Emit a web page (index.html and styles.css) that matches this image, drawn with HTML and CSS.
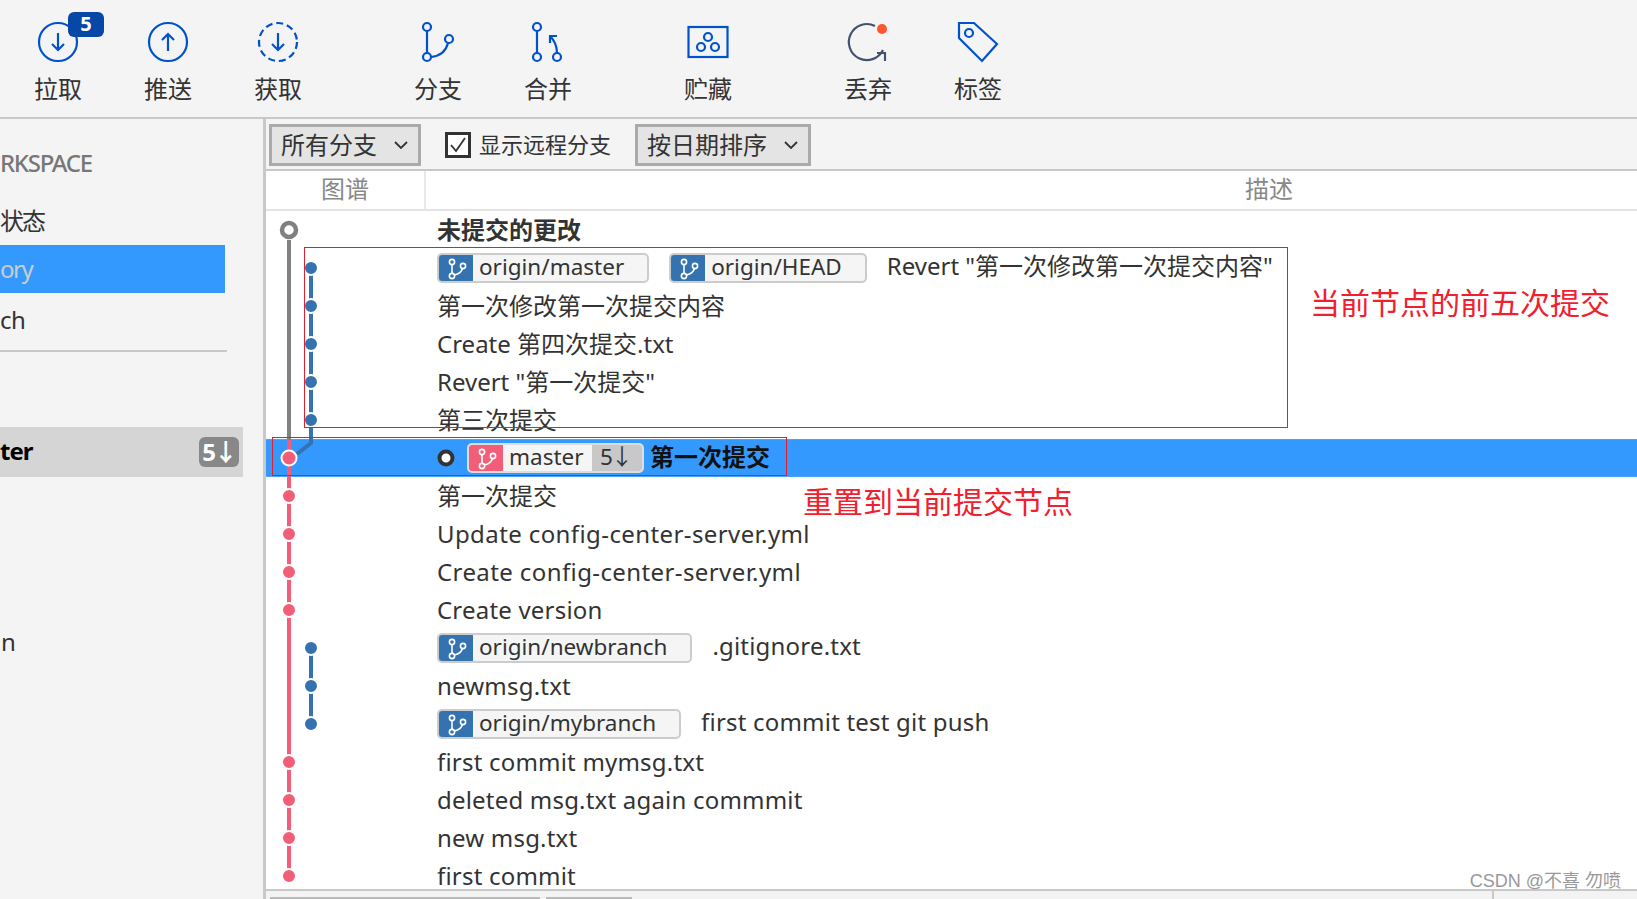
FILE: index.html
```html
<!DOCTYPE html>
<html lang="zh-CN">
<head>
  <meta charset="UTF-8">
  <meta name="viewport" content="width=device-width, initial-scale=1.0">
  <title>Sourcetree History</title>
  <link rel="stylesheet" href="styles.css">
</head>
<body>
  <header class="toolbar">
    <div class="tool-group">
      <div class="tool">
        <svg class="tool-icon" viewBox="0 0 44 44"><circle cx="22" cy="22" r="19"/><path d="M22 13v17M16 24l6 6 6-6"/></svg>
        <span class="tool-badge">5</span>
        <span class="tool-label">拉取</span>
      </div>
      <div class="tool">
        <svg class="tool-icon" viewBox="0 0 44 44"><circle cx="22" cy="22" r="19"/><path d="M22 31V14M16 20l6-6 6 6"/></svg>
        <span class="tool-label">推送</span>
      </div>
      <div class="tool">
        <svg class="tool-icon" viewBox="0 0 44 44"><circle cx="22" cy="22" r="19" stroke-dasharray="7 3.9"/><path d="M22 13v17M16 24l6 6 6-6"/></svg>
        <span class="tool-label">获取</span>
      </div>
    </div>
    <div class="tool-group">
      <div class="tool">
        <svg class="tool-icon" viewBox="0 0 44 44"><circle cx="11" cy="7" r="4"/><circle cx="11" cy="37" r="4"/><circle cx="33" cy="19" r="4"/><path d="M11 11v22M15 37c9-1 15-6 17-14"/></svg>
        <span class="tool-label">分支</span>
      </div>
      <div class="tool">
        <svg class="tool-icon" viewBox="0 0 44 44"><circle cx="11" cy="7" r="4"/><circle cx="11" cy="37" r="4"/><circle cx="31" cy="37" r="4"/><path d="M11 11v22M31 33c0-7-2-12-7-17M24 23v-7h7"/></svg>
        <span class="tool-label">合并</span>
      </div>
    </div>
    <div class="tool-group">
      <div class="tool">
        <svg class="tool-icon" viewBox="0 0 44 44"><rect x="2.5" y="7" width="39" height="30"/><circle cx="22" cy="17" r="4"/><circle cx="15" cy="27" r="4"/><circle cx="29" cy="27" r="4"/></svg>
        <span class="tool-label">贮藏</span>
      </div>
    </div>
    <div class="tool-group">
      <div class="tool">
        <svg class="tool-icon" viewBox="0 0 44 44"><path class="icon-slate" d="M29 6A18 18 0 1 0 37 30M31 33h8v8"/><circle class="icon-dot" cx="36" cy="9" r="5"/></svg>
        <span class="tool-label">丢弃</span>
      </div>
      <div class="tool">
        <svg class="tool-icon" viewBox="0 0 44 44"><path d="M3 3h15l23 21-15 17L3 18z"/><circle cx="13" cy="13" r="4"/></svg>
        <span class="tool-label">标签</span>
      </div>
    </div>
  </header>

  <div class="workspace">
    <aside class="sidebar">
      <div class="side-heading">RKSPACE</div>
      <div class="side-item side-status">状态</div>
      <div class="side-item side-active">ory</div>
      <div class="side-item side-search">ch</div>
      <div class="side-divider"></div>
      <div class="side-branch">
        <span class="side-branch-name">ter</span>
        <span class="side-count">5↓</span>
      </div>
      <div class="side-item side-remote">n</div>
    </aside>

    <main class="main">
      <div class="filters">
        <div class="dropdown dropdown-branch"><span class="dropdown-text">所有分支</span>
          <svg class="chevron" viewBox="0 0 14 8"><path d="M1 1l6 6 6-6"/></svg>
        </div>
        <label class="remote-check">
          <svg class="checkbox" viewBox="0 0 26 26"><rect x="1.5" y="1.5" width="23" height="23"/><path d="M6 13l5 6 9-13"/></svg>
          <span class="dropdown-text">显示远程分支</span>
        </label>
        <div class="dropdown dropdown-sort"><span class="dropdown-text">按日期排序</span>
          <svg class="chevron" viewBox="0 0 14 8"><path d="M1 1l6 6 6-6"/></svg>
        </div>
      </div>

      <div class="columns">
        <div class="col-graph">图谱</div>
        <div class="col-desc">描述</div>
      </div>

      <div class="commits">
        <div class="row"><strong>未提交的更改</strong></div>
        <div class="row">
          <span class="ref ref-wide"><svg class="ref-icon" viewBox="0 0 36 30"><circle cx="15" cy="9" r="2.6"/><circle cx="15" cy="23" r="2.6"/><circle cx="26" cy="13" r="2.6"/><path d="M15 12v8M17.500 22c4-1 7-3 8-6.500"/></svg>origin/master</span>
          <span class="ref ref-head"><svg class="ref-icon" viewBox="0 0 36 30"><circle cx="15" cy="9" r="2.6"/><circle cx="15" cy="23" r="2.6"/><circle cx="26" cy="13" r="2.6"/><path d="M15 12v8M17.500 22c4-1 7-3 8-6.500"/></svg>origin/HEAD</span>
          <span class="ref-desc">Revert "第一次修改第一次提交内容"</span>
        </div>
        <div class="row">第一次修改第一次提交内容</div>
        <div class="row">Create 第四次提交.txt</div>
        <div class="row">Revert "第一次提交"</div>
        <div class="row">第三次提交</div>
        <div class="row row-selected">
          <svg class="head-ring" viewBox="0 0 20 20"><circle cx="10" cy="10" r="6.500"/></svg>
          <span class="ref ref-local"><svg class="ref-icon" viewBox="0 0 36 30"><circle cx="15" cy="9" r="2.6"/><circle cx="15" cy="23" r="2.6"/><circle cx="26" cy="13" r="2.6"/><path d="M15 12v8M17.500 22c4-1 7-3 8-6.500"/></svg><span class="ref-name">master</span><span class="ref-behind">5↓</span></span>
          <strong>第一次提交</strong>
        </div>
        <div class="row">第一次提交</div>
        <div class="row latin-wide">Update config-center-server.yml</div>
        <div class="row latin-wide">Create config-center-server.yml</div>
        <div class="row latin">Create version</div>
        <div class="row">
          <span class="ref ref-wide"><svg class="ref-icon" viewBox="0 0 36 30"><circle cx="15" cy="9" r="2.6"/><circle cx="15" cy="23" r="2.6"/><circle cx="26" cy="13" r="2.6"/><path d="M15 12v8M17.500 22c4-1 7-3 8-6.500"/></svg>origin/newbranch</span>
          <span class="ref-desc latin">.gitignore.txt</span>
        </div>
        <div class="row latin">newmsg.txt</div>
        <div class="row">
          <span class="ref ref-wide"><svg class="ref-icon" viewBox="0 0 36 30"><circle cx="15" cy="9" r="2.6"/><circle cx="15" cy="23" r="2.6"/><circle cx="26" cy="13" r="2.6"/><path d="M15 12v8M17.500 22c4-1 7-3 8-6.500"/></svg>origin/mybranch</span>
          <span class="ref-desc latin">first commit test git push</span>
        </div>
        <div class="row latin">first commit mymsg.txt</div>
        <div class="row latin">deleted msg.txt again commmit</div>
        <div class="row latin">new msg.txt</div>
        <div class="row latin">first commit</div>

        <svg class="graph" viewBox="0 0 100 678">
          <path class="edge edge-gray" d="M23 29V229"/>
          <path class="edge edge-pink" d="M23 229V665"/>
          <path class="edge edge-blue" d="M45 57V232L31 243"/>
          <path class="edge edge-blue" d="M45 437V513"/>
          <circle class="node-open" cx="23" cy="19" r="7"/>
          <circle class="node node-blue" cx="45" cy="57" r="7"/>
          <circle class="node node-blue" cx="45" cy="95" r="7"/>
          <circle class="node node-blue" cx="45" cy="133" r="7"/>
          <circle class="node node-blue" cx="45" cy="171" r="7"/>
          <circle class="node node-blue" cx="45" cy="209" r="7"/>
          <circle class="node node-current" cx="23" cy="247" r="7.500"/>
          <circle class="node node-pink" cx="23" cy="285" r="7"/>
          <circle class="node node-pink" cx="23" cy="323" r="7"/>
          <circle class="node node-pink" cx="23" cy="361" r="7"/>
          <circle class="node node-pink" cx="23" cy="399" r="7"/>
          <circle class="node node-blue" cx="45" cy="437" r="7"/>
          <circle class="node node-blue" cx="45" cy="475" r="7"/>
          <circle class="node node-blue" cx="45" cy="513" r="7"/>
          <circle class="node node-pink" cx="23" cy="551" r="7"/>
          <circle class="node node-pink" cx="23" cy="589" r="7"/>
          <circle class="node node-pink" cx="23" cy="627" r="7"/>
          <circle class="node node-pink" cx="23" cy="665" r="7"/>
        </svg>

        <div class="mark mark-five"></div>
        <div class="mark mark-current"></div>
        <div class="note note-five">当前节点的前五次提交</div>
        <div class="note note-reset">重置到当前提交节点</div>
      </div>

      <div class="bottom">
        <div class="bottom-tab bottom-tab-files"></div>
        <div class="bottom-tab bottom-tab-stage"></div>
        <div class="bottom-split"></div>
      </div>
    </main>
  </div>

  <div class="watermark">CSDN @不喜 勿喷</div>
</body>
</html>
```

FILE: styles.css
```css
* {
  box-sizing: border-box;
}

html, body {
  height: 100%;
}

body {
  margin: 0;
  position: relative;
  display: flex;
  flex-direction: column;
  overflow: hidden;
  font-family: "Noto Sans", "Noto Sans CJK SC", sans-serif;
  font-size: 24px;
  color: #333;
  background-color: #f4f4f4;
}

.toolbar {
  display: flex;
  gap: 50px;
  height: 119px;
  padding-left: 3px;
  border-bottom: 2px solid #c8c8c8;
}

.tool-group {
  display: flex;
}

.tool {
  position: relative;
  display: flex;
  flex-direction: column;
  align-items: center;
  width: 110px;
  padding-top: 20px;
}

.tool-icon {
  width: 44px;
  height: 44px;
  fill: none;
  stroke: #0052cc;
  stroke-width: 2.2;
}

.icon-slate {
  stroke: #42526e;
}

.icon-dot {
  fill: #ff5630;
  stroke: none;
}

.tool-badge {
  position: absolute;
  left: 65px;
  top: 12px;
  width: 36px;
  height: 25px;
  border-radius: 6px;
  background-color: #0747a6;
  color: #fff;
  font-size: 20px;
  font-weight: bold;
  line-height: 23px;
  text-align: center;
}

.tool-label {
  margin-top: 8px;
  line-height: 34px;
}

.workspace {
  flex: 1;
  display: flex;
  min-height: 0;
}

.sidebar {
  width: 266px;
  flex-shrink: 0;
  overflow: hidden;
  border-right: 3px solid #c8c8c8;
}

.side-heading {
  margin: 29px 0 20px;
  line-height: 30px;
  letter-spacing: -1.3px;
  font-weight: 500;
  color: #777;
  white-space: nowrap;
}

.side-item {
  width: 225px;
  height: 48px;
  line-height: 46px;
}

.side-status {
  height: 47px;
  line-height: 45px;
  letter-spacing: -2px;
}

.side-active {
  line-height: 48px;
  background-color: #3399ff;
  color: #ccc;
  letter-spacing: -1.5px;
}

.side-search {
  line-height: 54px;
  letter-spacing: -0.5px;
}

.side-divider {
  width: 227px;
  height: 2px;
  margin-top: 9px;
  background-color: #c8c8c8;
}

.side-branch {
  display: flex;
  align-items: center;
  justify-content: space-between;
  width: 243px;
  height: 50px;
  margin-top: 75px;
  padding: 0 4px 0 0;
  background-color: #d5d5d5;
}

.side-branch-name {
  margin-bottom: 4px;
  font-weight: bold;
  color: #000;
  letter-spacing: -1px;
}

.side-count {
  width: 40px;
  height: 30px;
  border-radius: 6px;
  background-color: #888;
  color: #fff;
  font-weight: bold;
  letter-spacing: -2px;
  line-height: 29px;
  text-align: center;
}

.side-remote {
  margin-top: 142px;
  padding-left: 1px;
}

.main {
  flex: 1;
  min-width: 0;
  display: flex;
  flex-direction: column;
  overflow: hidden;
}

.filters {
  display: flex;
  align-items: center;
  height: 52px;
  padding: 2px 0 0 3px;
  border-bottom: 2px solid #c8c8c8;
}

.dropdown {
  display: flex;
  align-items: center;
  height: 42px;
  padding-left: 9px;
  border: 3px solid #aaa;
  background-color: #e4e4e4;
}

.dropdown-text {
  margin-top: -4px;
  white-space: nowrap;
}

.dropdown-branch {
  width: 152px;
}

.dropdown-sort {
  width: 176px;
}

.chevron {
  width: 14px;
  height: 8px;
  margin-left: 17px;
  fill: none;
  stroke: #333;
  stroke-width: 1.8;
}

.remote-check {
  display: flex;
  align-items: center;
  width: 190px;
  margin-left: 24px;
  font-size: 22px;
}

.checkbox {
  width: 26px;
  height: 26px;
  margin-right: 8px;
  flex-shrink: 0;
  fill: #fff;
  stroke: #333;
  stroke-width: 3;
}

.checkbox path {
  fill: none;
  stroke-width: 1.8;
}

.columns {
  display: flex;
  height: 40px;
  background-color: #fff;
  border-bottom: 2px solid #e4e4e4;
  color: #888;
  line-height: 36px;
  text-align: center;
}

.col-graph {
  flex: 0 0 160px;
  border-right: 2px solid #e8e8e8;
}

.col-desc {
  flex: 0 0 1686px;
}

.commits {
  position: relative;
  flex: 1;
  min-height: 0;
  overflow: hidden;
  background-color: #fff;
}

.row {
  display: flex;
  align-items: center;
  height: 38px;
  padding: 0 0 1px 171px;
  line-height: 28px;
  white-space: nowrap;
}

.latin {
  letter-spacing: 0.2px;
}

.latin-wide {
  letter-spacing: 0.4px;
}

.row strong {
  color: #333;
}

.row-selected {
  background-color: #3399ff;
  border-top: 1px solid #4aa4ff;
  border-bottom: 1px solid #4aa4ff;
}

.row-selected strong {
  margin: 0 0 2px 6px;
  color: #111;
}

.head-ring {
  width: 20px;
  height: 20px;
  margin: 1px 11px 0 -1px;
  flex-shrink: 0;
  fill: #fff;
  stroke: #333;
  stroke-width: 4;
}

.ref {
  display: flex;
  align-items: center;
  height: 30px;
  margin-top: 1px;
  padding-bottom: 3px;
  overflow: hidden;
  border: 2px solid #ccc;
  border-radius: 5px;
  background-color: #f5f5f5;
  font-size: 22.5px;
  line-height: 22px;
  letter-spacing: 0;
}

.ref-wide,
.ref-head {
  margin-right: 20px;
  padding-right: 23px;
}

.ref-desc {
  margin-bottom: 4px;
}

.ref-icon {
  align-self: flex-start;
  width: 36px;
  height: 30px;
  margin: -2px 6px 0 -2px;
  flex-shrink: 0;
  background-color: #3572b0;
  fill: none;
  stroke: #fff;
  stroke-width: 1.6;
}

.ref-local {
  padding-bottom: 0;
  border-color: #ddd;
}

.ref-local .ref-icon {
  background-color: #f25d78;
}

.ref-name {
  width: 83px;
  margin-bottom: 3px;
}

.ref-behind {
  align-self: flex-start;
  width: 50px;
  height: 26px;
  padding-left: 8px;
  background-color: #c8c8c8;
  letter-spacing: -2px;
  line-height: 23px;
}

.graph {
  position: absolute;
  left: 0;
  top: 0;
  width: 100px;
  height: 678px;
}

.edge {
  fill: none;
  stroke-width: 4;
}

.edge-gray {
  stroke: #808080;
}

.edge-pink {
  stroke: #f25d78;
}

.edge-blue {
  stroke: #3572b0;
}

.node {
  stroke: #fff;
  stroke-width: 2;
}

.node-blue {
  fill: #3572b0;
}

.node-pink,
.node-current {
  fill: #f25d78;
}

.node-open {
  fill: #fff;
  stroke: #808080;
  stroke-width: 4.500;
}

.mark {
  position: absolute;
  border: 1px solid #e0202c;
}

.mark-five {
  left: 38px;
  top: 36px;
  width: 984px;
  height: 181px;
}

.mark-current {
  left: 6px;
  top: 226px;
  width: 515px;
  height: 39px;
}

.note {
  position: absolute;
  color: #f0202f;
  font-size: 30px;
  line-height: 44px;
  white-space: nowrap;
}

.note-five {
  left: 1044px;
  top: 70px;
}

.note-reset {
  left: 537px;
  top: 269px;
}

.bottom {
  position: relative;
  display: flex;
  gap: 6px;
  height: 10px;
  padding: 6px 0 0 4px;
  border-top: 2px solid #c8c8c8;
  background-color: #f3f3f3;
}

.bottom-tab {
  height: 4px;
  border: 2px solid #bbb;
  border-bottom: none;
}

.bottom-tab-files {
  width: 270px;
}

.bottom-tab-stage {
  width: 86px;
}

.bottom-split {
  position: absolute;
  left: 1226px;
  top: 0;
  width: 2px;
  height: 10px;
  background-color: #c8c8c8;
}

.watermark {
  position: absolute;
  right: 16px;
  top: 869px;
  font-family: "Liberation Sans", "Noto Sans CJK SC", sans-serif;
  font-size: 18px;
  line-height: 24px;
  color: #999;
}
```
